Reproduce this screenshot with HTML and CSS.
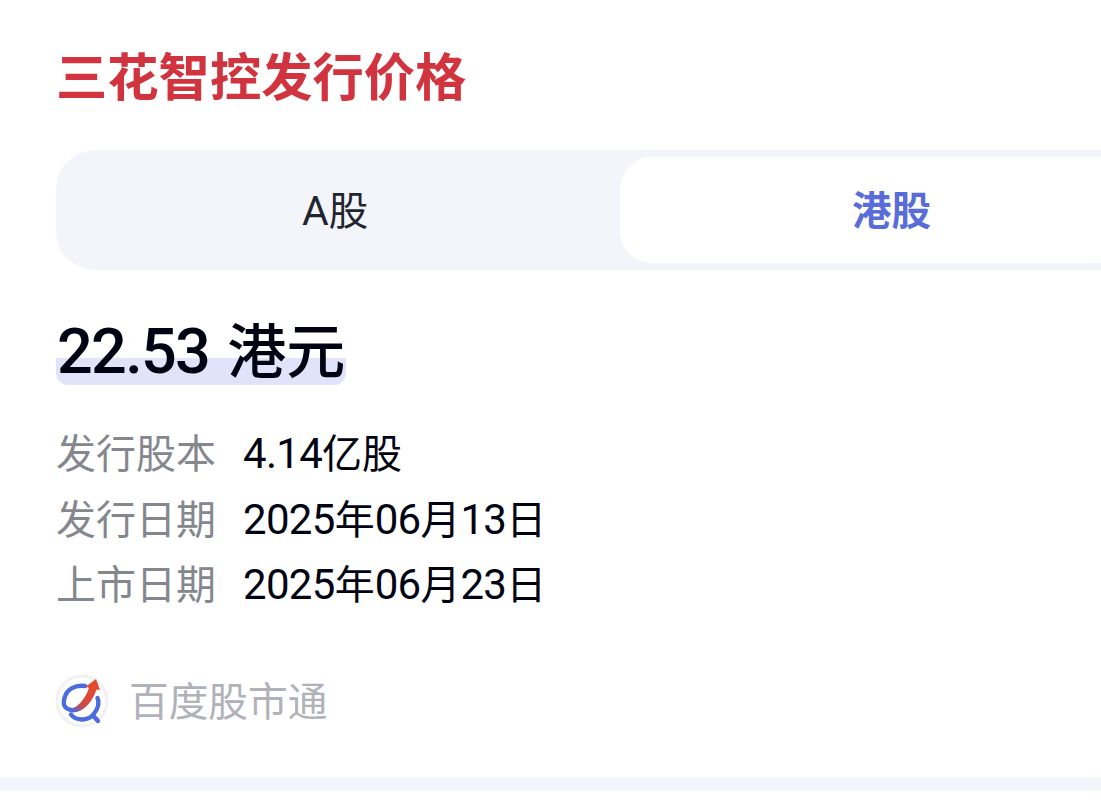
FILE: index.html
```
<!DOCTYPE html>
<html lang="zh-CN">
<head>
  <meta charset="UTF-8">
  <meta name="viewport" content="width=device-width, initial-scale=1.0">
  <title>三花智控发行价格</title>
  <link rel="stylesheet" href="styles.css">
</head>
<body>
  <div class="card">
    <h1 class="title">三花智控发行价格</h1>

    <!-- Market tabs -->
    <div class="tabs">
      <div class="tab"><span class="latin">A</span>股</div>
      <div class="tab active">港股</div>
    </div>

    <div class="price"><span class="price-num">22.53</span>港元</div>

    <div class="info">
      <div class="row">
        <span class="label">发行股本</span>
        <span class="value"><span class="num">4.14</span>亿股</span>
      </div>
      <div class="row">
        <span class="label">发行日期</span>
        <span class="value"><span class="num">2025</span>年<span class="num">06</span>月<span class="num">13</span>日</span>
      </div>
      <div class="row">
        <span class="label">上市日期</span>
        <span class="value"><span class="num">2025</span>年<span class="num">06</span>月<span class="num">23</span>日</span>
      </div>
    </div>

    <!-- Data source -->
    <div class="source">
      <svg class="logo" width="54" height="54" viewBox="0 0 54 54">
        <defs>
          <linearGradient id="arrow" x1="16" y1="35" x2="34" y2="14" gradientUnits="userSpaceOnUse">
            <stop offset="0" stop-color="#4f6bdb"></stop>
            <stop offset="0.35" stop-color="#c94c4a"></stop>
            <stop offset="1" stop-color="#e2492f"></stop>
          </linearGradient>
        </defs>
        <circle cx="27" cy="27" r="25" fill="#fff" stroke="#f1f1f3" stroke-width="3"></circle>
        <path d="M30 12C20 10.500 12 15.500 9.800 23C7.500 30 9 35.500 17 36" fill="none" stroke="#4c6bdc" stroke-width="4.400" stroke-linecap="round"></path>
        <path d="M16 40.500C20.500 46.500 32 47.500 38 41C43 35 45 29.500 42.500 24M37.500 41L43 47" fill="none" stroke="#4c6bdc" stroke-width="4.400" stroke-linecap="round"></path>
        <path d="M14 34.500C22 35.500 30 25 34 14L31 12.500L41 5L45 16L41.500 15.500C37.500 28 27 41 14 38Z" fill="url(#arrow)"></path>
      </svg>
      <span class="source-name">百度股市通</span>
    </div>
  </div>
  <div class="divider"></div>
</body>
</html>
```

FILE: styles.css
```
* {
  box-sizing: border-box;
}

body {
  margin: 0;
  background: #fff;
  font-family: "Noto Sans CJK SC", sans-serif;
  color: #000311;
}

.card {
  height: 777px;
  padding: 39px 0 0 56px;
}

.title {
  margin: 0;
  font-size: 51.300px;
  line-height: 70px;
  font-weight: 700;
  color: #d2343f;
}

/* Tabs, running off the right side */
.tabs {
  display: flex;
  gap: 13px;
  height: 120px;
  margin-top: 41px;
  padding: 7px 0 7px 7px;
  border-radius: 39px 0 0 39px;
  background: #f4f5fa;
}

.tab {
  width: 544px;
  height: 106px;
  border-radius: 32px;
  font-size: 39.500px;
  line-height: 101px;
  text-align: center;
  color: #22252f;
}

.tab.active {
  flex: 1;
  width: auto;
  padding-left: 232px;
  border-radius: 32px 0 0 32px;
  background: #fff;
  font-weight: 700;
  text-align: left;
  color: #586dd9;
}

.latin {
  font-family: Roboto, sans-serif;
  font-size: 41px;
}

/* Issue price with a highlighted underline */
.price {
  width: 290px;
  height: 74px;
  margin-top: 41px;
  padding-left: 1px;
  font-size: 59px;
  line-height: 73px;
  font-weight: 500;
  white-space: nowrap;
  border-radius: 0 0 12px 12px;
  background: linear-gradient(#e0e3fa, #e0e3fa) bottom / 100% 27px no-repeat;
}

.price-num {
  margin-right: 18px;
  font-family: Roboto, sans-serif;
  font-size: 63px;
  letter-spacing: -1.700px;
}

/* Details */
.info {
  margin-top: 34px;
}

.row {
  display: flex;
  height: 65.500px;
  font-size: 40px;
  line-height: 65.500px;
}

.label {
  width: 187px;
  color: #85878f;
}

.num {
  font-family: Roboto, sans-serif;
  font-size: 42px;
  letter-spacing: -0.700px;
}

.source {
  display: flex;
  align-items: center;
  gap: 20px;
  height: 56px;
  margin-top: 57px;
}

.logo {
  margin-left: -1px;
}

.source-name {
  font-size: 39.700px;
  line-height: 56px;
  padding-bottom: 3px;
  color: #b0b2ba;
}

.divider {
  height: 14px;
  background: #f4f5fa;
}
```
